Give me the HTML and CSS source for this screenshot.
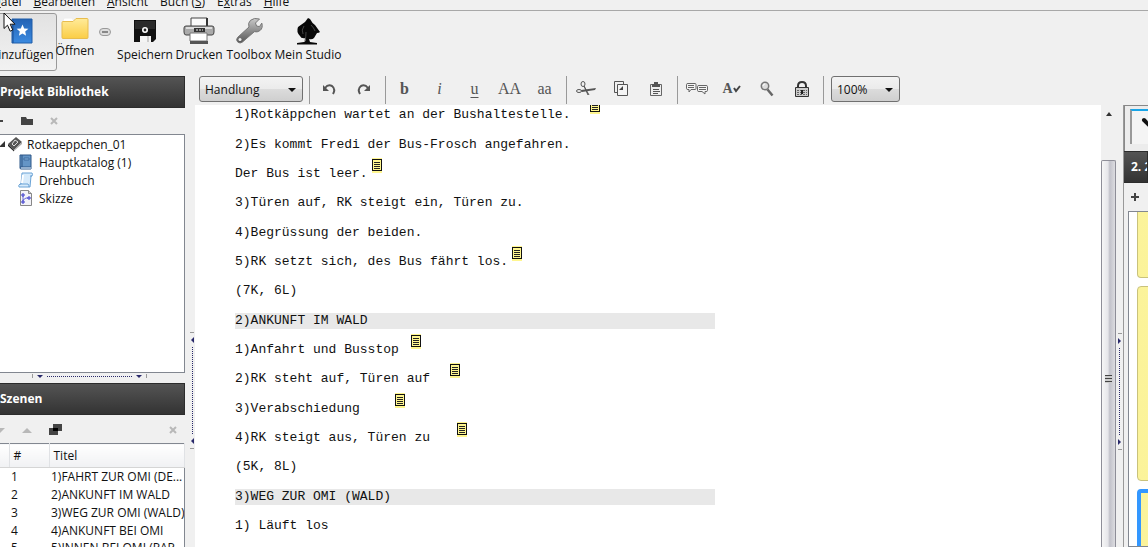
FILE: index.html
```
<!DOCTYPE html>
<html lang="de">
<head>
  <meta charset="UTF-8">
  <title>Rotkaeppchen_01</title>
  <link rel="stylesheet" href="styles.css">
</head>
<body>

<nav class="menu">
  <a href="#"><u>D</u>atei</a>
  <a href="#"><u>B</u>earbeiten</a>
  <a href="#"><u>A</u>nsicht</a>
  <a href="#">Buch (<u>S</u>)</a>
  <a href="#">E<u>x</u>tras</a>
  <a href="#"><u>H</u>ilfe</a>
</nav>

<div class="toolbar">
  <button class="tool active">
    <svg width="22" height="26" viewBox="0 0 22 26"><defs><linearGradient id="gb" x2="0" y2="1"><stop stop-color="#2463b4"/><stop offset="1" stop-color="#3b8ae0"/></linearGradient></defs><path d="M1 1h20v24H1z" fill="url(#gb)" stroke="#1f5da8"/><path d="M2 1v24" stroke="#1a4f94"/><path d="M11.500 6.500l1.700 3.900 4.200.4-3.200 2.800.9 4.100-3.600-2.100-3.600 2.100.9-4.100-3.200-2.800 4.200-.4z" fill="#fff"/></svg>
    <span>Hinzufügen</span>
  </button>
  <button class="tool open">
    <svg width="28" height="24" viewBox="0 0 28 24"><defs><linearGradient id="gf" x2="0" y2="1"><stop stop-color="#ffeb9a"/><stop offset="1" stop-color="#fbcd45"/></linearGradient></defs><path d="M2 4l1-3h8l2 3" fill="#fff" stroke="#eee"/><path d="M1 5.500q0-1 1-1h10l3-3h11q1 0 1 1v18q0 1-1 1H2q-1 0-1-1z" fill="url(#gf)" stroke="#e8bd4e"/></svg>
    <span>Öffnen</span>
  </button>
  <button class="more" aria-label="Mehr">
    <svg width="12" height="9" viewBox="0 0 12 9"><rect x=".5" y=".5" width="11" height="7" rx="3.500" fill="#ddd" stroke="#999"/><path d="M3 3h6v2H3z" fill="#888"/></svg>
  </button>
  <button class="tool save">
    <svg width="24" height="26" viewBox="0 0 24 26"><path d="M1 2h22v19l-3 3H1z" fill="#111"/><path d="M2 3h20v8H2z" fill="#2a2a2a"/><circle cx="12" cy="12" r="2.200" fill="#222" stroke="#fff" stroke-width="1.600"/><path d="M7 18h11v6H7z" fill="#f4f4f4"/><path d="M14 18h2v6h-2z" fill="#ccc"/></svg>
    <span>Speichern</span>
  </button>
  <button class="tool print">
    <svg width="32" height="28" viewBox="0 0 32 28"><path d="M8 1h16v10H8z" fill="#fafafa" stroke="#444"/><path d="M24 1v9" stroke="#333" stroke-width="2"/><path d="M3 9h26q2 0 2 2v4q0 3-2 3H3q-2 0-2-3v-4q0-2 2-2z" fill="#aaa" stroke="#444"/><path d="M3 10h26v2H3z" fill="#ddd"/><path d="M11 11h11v4H11z" fill="#333"/><path d="M13 13h2m1 0h2m1 0h1" stroke="#eee"/><path d="M7 16h17v8H7z" fill="#fff" stroke="#777"/><path d="M7 24h18v3H7z" fill="#555"/></svg>
    <span>Drucken</span>
  </button>
  <button class="tool box">
    <svg width="28" height="28" viewBox="0 0 28 28"><defs><linearGradient id="gw" x2="0" y2="1"><stop stop-color="#c9c9c9"/><stop offset="1" stop-color="#555"/></linearGradient></defs><path d="M24.500 2l-4 4 1 3 3 .6 2.300-3.500q1.500 5-2 7.600-2.500 1.800-5.500 1L7.500 25q-2.500 2-4.800 0-2.200-2.300 0-4.700L14 10q-1.500-4 1.500-6.700 3.500-3 9-1.300z" fill="url(#gw)" stroke="#777"/><circle cx="5" cy="22.500" r="1.500" fill="#eee"/></svg>
    <span>Toolbox</span>
  </button>
  <button class="tool studio">
    <svg width="26" height="28" viewBox="0 0 26 28"><path d="M13 1l2 1q2 4 5 6l5 7q-1 1-3 1l-3 5q-2 2-5 1l1 3 7 1v1.500H2V26l7-1q2-1 2-4-5 1-6-2-4-4-2-9l7-5z" fill="#080808"/><path d="M9 9q-3 4-1 8" fill="none" stroke="#444"/><path d="M16 8q3 3 4 6m-9 1q0 5-1 9" fill="none" stroke="#444"/></svg>
    <span>Mein Studio</span>
  </button>
</div>

<main class="work">
  <aside class="left">
    <h2>Projekt Bibliothek</h2>
    <div class="icons library-icons">
      <button aria-label="Neu"><svg width="10" height="10" viewBox="0 0 10 10"><path d="M1 5h8M5 1v8" stroke="#444" stroke-width="2"/></svg></button>
      <button aria-label="Ordner"><svg width="12" height="10" viewBox="0 0 12 10"><path d="M0 1h5l1 2h6v6H0z" fill="#444"/></svg></button>
      <button aria-label="Löschen"><svg width="8" height="8" viewBox="0 0 8 8"><path d="M1 1l6 6M7 1L1 7" stroke="#b8b8b8" stroke-width="2"/></svg></button>
    </div>
    <ul class="tree">
      <li class="root">
        <svg width="26" height="16" viewBox="0 0 26 16"><path d="M5 5v6H-1z" fill="#333"/><path d="M8 8l8-7 6 5-8 8z" fill="#555"/><path d="M8 8l6 6v1.500L8 10z" fill="#222"/><path d="M14 14l8-8v2l-8 7z" fill="#aaa"/><path d="M12 8l3-4 3 2-4 4z" fill="none" stroke="#ddd"/></svg>
        Rotkaeppchen_01
      </li>
      <li>
        <svg width="16" height="16" viewBox="0 0 16 16"><path d="M2 1h11v14H3q-1 0-1-1z" fill="#6495c6" stroke="#2c5687"/><path d="M4 1v12M2 13h11" stroke="#2c5687"/><path d="M3 14h10" stroke="#dce8f4"/><path d="M6 4h5v2H6z" fill="#88b2dc" stroke="#3f6c9f"/></svg>
        Hauptkatalog (1)
      </li>
      <li>
        <svg width="16" height="16" viewBox="0 0 16 16"><path d="M4 1h10q1 1 0 3h-1l-1 11H1q-1-2 1-3h1z" fill="#d7ebfb" stroke="#6ba3d6"/><path d="M12 4h2M2 12h8q1 1 1 3" fill="none" stroke="#6ba3d6"/><path d="M5 3l-1 8" stroke="#fff" stroke-width="2"/></svg>
        Drehbuch
      </li>
      <li>
        <svg width="16" height="16" viewBox="0 0 16 16"><path d="M2.500.5h8l3 3v12h-11z" fill="#f3f3f8" stroke="#888"/><path d="M10.500.5v3h3" fill="#ccc" stroke="#888"/><path d="M5 5v7M5 10l3-2h3" fill="none" stroke="#6a6ad8"/><path d="M4 4h2v2H4zM4 11h2v2H4zM10 7h2v2h-2z" fill="#fff" stroke="#3030c8"/></svg>
        Skizze
      </li>
    </ul>
    <div class="splitter-h"><i class="tick"></i><i class="down"></i><i class="dots"></i><i class="down"></i><i class="tick"></i></div>
    <section class="scenes">
      <h2>Szenen</h2>
      <div class="icons scene-icons">
        <button aria-label="Nach unten"><svg width="10" height="5" viewBox="0 0 10 5"><path d="M0 0h10L5 5z" fill="#b8b8b8"/></svg></button>
        <button aria-label="Nach oben"><svg width="10" height="5" viewBox="0 0 10 5"><path d="M0 5h10L5 0z" fill="#b8b8b8"/></svg></button>
        <button aria-label="Kopieren"><svg width="14" height="12" viewBox="0 0 14 12"><path d="M4 0h9v7H4zM0 4h9v7H0z" fill="#444"/><path d="M4 4h5v3H4z" fill="#000"/></svg></button>
        <button class="end" aria-label="Löschen"><svg width="8" height="8" viewBox="0 0 8 8"><path d="M1 1l6 6M7 1L1 7" stroke="#b8b8b8" stroke-width="2"/></svg></button>
      </div>
      <table>
        <thead><tr><th></th><th>#</th><th>Titel</th></tr></thead>
        <tbody>
          <tr><td></td><td>1</td><td>1)FAHRT ZUR OMI (DE...</td></tr>
          <tr><td></td><td>2</td><td>2)ANKUNFT IM WALD</td></tr>
          <tr><td></td><td>3</td><td>3)WEG ZUR OMI (WALD)</td></tr>
          <tr><td></td><td>4</td><td>4)ANKUNFT BEI OMI</td></tr>
          <tr><td></td><td>5</td><td>5)INNEN BEI OMI (PAP...</td></tr>
        </tbody>
      </table>
    </section>
  </aside>

  <div class="splitter-v left-split"><i class="tick"></i><i class="arrow back"></i><i class="dots"></i><i class="arrow back"></i><i class="tick"></i></div>

  <section class="center">
    <div class="format">
      <label class="pick style-pick"><select aria-label="Absatzart"><option>Handlung</option></select></label>
      <i class="sep"></i>
      <button aria-label="Rückgängig"><svg width="16" height="14" viewBox="0 0 16 14"><path d="M4 6q3-4 7-2 4 3 1 8" fill="none" stroke="#555" stroke-width="2"/><path d="M2 3v6h6z" fill="#555"/></svg></button>
      <button aria-label="Wiederholen"><svg width="16" height="14" viewBox="0 0 16 14"><path d="M12 6Q9 2 5 4q-4 3-1 8" fill="none" stroke="#555" stroke-width="2"/><path d="M14 3v6H8z" fill="#555"/></svg></button>
      <i class="sep"></i>
      <button><b>b</b></button>
      <button><em>i</em></button>
      <button><u>u</u></button>
      <button>AA</button>
      <button>aa</button>
      <i class="sep"></i>
      <button aria-label="Ausschneiden"><svg width="20" height="16" viewBox="0 0 20 16"><g fill="none" stroke="#555"><ellipse cx="7" cy="3" rx="2" ry="2.500"/><path d="M8 5l4 9"/><ellipse cx="3" cy="10" rx="2.500" ry="1.500"/><path d="M8 5l5 9"/></g><path d="M5 9l15-2-1 2-13 2z" fill="#555"/></svg></button>
      <button aria-label="Kopieren"><svg width="14" height="16" viewBox="0 0 14 16"><path d="M3.500 11.500h-3V.5h9v3" fill="none" stroke="#555"/><path d="M3.500 3.500h10v11h-10z" fill="#f4f4f4" stroke="#555"/><path d="M9 5v4H5z" fill="#444"/></svg></button>
      <button aria-label="Einfügen"><svg width="12" height="14" viewBox="0 0 12 14"><path d="M.5 2.500h11v11H.5z" fill="#eee" stroke="#666"/><path d="M4 0h4v2h2v3H2V2h2z" fill="#555"/><path d="M3 7.500h6M3 9.500h7M3 11.500h5" stroke="#555"/></svg></button>
      <i class="sep"></i>
      <button aria-label="Kommentare"><svg width="22" height="14" viewBox="0 0 22 14"><g fill="#f4f4f4" stroke="#666"><path d="M2 1.500h7q1 0 1 1v4q0 1-1 1H5L3 10V7.500H2q-1.500 0-1.500-1v-4q0-1 1.500-1z"/><path d="M13 3.500h7q1.500 0 1.500 1v4q0 1-1.500 1h-1V12l-3-2.500h-3q-1.500 0-1.500-1v-4q0-1 1.500-1z"/><path d="M2 3.500h6M2 5.500h6M13 5.500h7M13 7.500h7"/></g></svg></button>
      <button class="spell" aria-label="Rechtschreibung"><b>A</b><svg width="8" height="8" viewBox="0 0 8 8"><path d="M1 3l2 3 4-5" fill="none" stroke="#444" stroke-width="2"/></svg></button>
      <button aria-label="Suchen"><svg width="14" height="16" viewBox="0 0 14 16"><circle cx="5" cy="5" r="3.700" fill="#ddd" stroke="#777" stroke-width="1.500"/><path d="M5 3q-2 0-2 2" fill="none" stroke="#fff"/><path d="M7.500 8.500l5 6" stroke="#666" stroke-width="2.500"/></svg></button>
      <button aria-label="Sperren"><svg width="14" height="16" viewBox="0 0 14 16"><path d="M3 7V5q0-4 4-4t4 4v2" fill="none" stroke="#333" stroke-width="2"/><path d="M.5 6.500h13v9H.5z" fill="#ccc" stroke="#333"/><path d="M2 9.500h10M2 11.500h10M2 13.500h10" stroke="#666" stroke-dasharray="2 1"/><path d="M6 9h2v4H6z" fill="#222"/></svg></button>
      <i class="sep"></i>
      <label class="pick zoom-pick"><select aria-label="Zoom"><option>100%</option></select></label>
    </div>
    <div class="editor">
      <div class="script">
        <p>1)Rotkäppchen wartet an der Bushaltestelle.  <i class="note"></i></p>
        <p>2)Es kommt Fredi der Bus-Frosch angefahren.</p>
        <p>Der Bus ist leer.<i class="note"></i></p>
        <p>3)Türen auf, RK steigt ein, Türen zu.</p>
        <p>4)Begrüssung der beiden.</p>
        <p>5)RK setzt sich, des Bus fährt los.<i class="note"></i></p>
        <p>(7K, 6L)</p>
        <p class="scene">2)ANKUNFT IM WALD</p>
        <p>1)Anfahrt und Busstop <i class="note"></i></p>
        <p>2)RK steht auf, Türen auf  <i class="note"></i></p>
        <p>3)Verabschiedung    <i class="note"></i></p>
        <p>4)RK steigt aus, Türen zu   <i class="note"></i></p>
        <p>(5K, 8L)</p>
        <p class="scene">3)WEG ZUR OMI (WALD)</p>
        <p>1) Läuft los</p>
      </div>
      <div class="scrollbar">
        <div class="up"></div>
        <div class="thumb"><i></i></div>
      </div>
    </div>
  </section>

  <div class="splitter-v right-split"><i class="tick"></i><i class="arrow"></i><i class="dots"></i><i class="arrow"></i><i class="tick"></i></div>

  <aside class="right">
    <div class="tabs"><button class="tab" aria-label="Stift"><svg width="26" height="28" viewBox="0 0 26 28"><path d="M12 8l14 14" stroke="#111" stroke-width="4" stroke-linecap="round"/></svg></button></div>
    <h2>2. 2)ANKUNFT</h2>
    <div class="icons card-icons">
      <button aria-label="Neue Karte"><svg width="8" height="8" viewBox="0 0 8 8"><path d="M0 4h8M4 0v8" stroke="#444" stroke-width="2"/></svg></button>
    </div>
    <div class="cards">
      <div class="card first"></div>
      <div class="card"></div>
      <div class="card selected"></div>
    </div>
  </aside>
</main>

<svg class="cursor" width="13" height="21" viewBox="0 0 13 21"><path d="M1 1v15.500l3.500-3.300 2.600 6 2.700-1.200-2.600-5.800H12z" fill="#fff" stroke="#111"/></svg>

</body>
</html>
```
FILE: styles.css
```
* { box-sizing: border-box; }
body {
  margin: 0;
  height: 100vh;
  overflow: hidden;
  display: flex;
  flex-direction: column;
  background: #f0f0f0;
  color: #111;
  font-family: "Open Sans", "Noto Sans", sans-serif;
  font-size: 12px;
}
button {
  background: none;
  border: none;
  padding: 0;
  margin: 0;
  font: inherit;
  color: inherit;
}
svg { display: block; flex: none; }
i { font-style: normal; }

/* menu */
.menu {
  height: 11px;
  flex: none;
  display: flex;
  align-items: flex-end;
  gap: 12px;
  overflow: hidden;
  border-bottom: 1px solid #a8a8a8;
  line-height: 16px;
}
.menu a { color: #111; text-decoration: none; white-space: nowrap; }
.menu a:first-child { margin-left: -8px; }

/* main toolbar */
.toolbar {
  height: 65px;
  flex: none;
  display: flex;
  align-items: flex-start;
  padding-top: 2px;
}
.tool {
  display: flex;
  flex-direction: column;
  align-items: center;
  padding-top: 4px;
  white-space: nowrap;
}
.tool svg { height: 28px; }
.tool span { line-height: 20px; }
.active {
  width: 71px;
  height: 58px;
  margin-left: -14px;
  padding-top: 3px;
  border: 1px solid #999;
  border-radius: 3px;
  background: linear-gradient(#e2e2e2, #f2f2f2);
}
.open { width: 36px; }
.open svg { height: 24px; }
.more { margin: 15px 0 0 6px; }
.save { width: 52px; margin-left: 8px; }
.print { width: 44px; margin-left: 6px; }
.box { width: 44px; margin-left: 6px; }
.studio { width: 64px; margin-left: 5px; }

/* panels */
.work { flex: 1; min-height: 0; display: flex; }
h2 {
  margin: 0;
  height: 32px;
  flex: none;
  font-size: 12px;
  line-height: 30px;
  color: #fff;
  background: linear-gradient(#545454, #333);
  border: 1px solid #2c2c2c;
  border-left: 0;
  white-space: nowrap;
  overflow: hidden;
}
.left {
  width: 185px;
  flex: none;
  display: flex;
  flex-direction: column;
}
.icons { display: flex; align-items: center; flex: none; }
.library-icons { height: 26px; gap: 17px; margin-left: -6px; }
.tree {
  flex: 1;
  margin: 0;
  padding: 0;
  list-style: none;
  background: #fff;
  border: 1px solid #828790;
  border-left: 0;
}
.tree li {
  display: flex;
  align-items: center;
  gap: 5px;
  height: 18px;
  padding-left: 18px;
}
.tree .root { padding-left: 0; gap: 1px; }

.splitter-h {
  height: 10px;
  flex: none;
  display: flex;
  align-items: flex-start;
  gap: 4px;
  padding: 1px 38px 0 32px;
}
.splitter-h .tick { width: 1px; height: 4px; background: #999; }
.splitter-h .down { border: 3px solid transparent; border-top-color: #28286a; border-bottom: 0; margin-top: 1px; }
.splitter-h .dots { flex: 1; border-top: 1px dotted #28286a; margin-top: 2px; }

.scenes { height: 164px; flex: none; overflow: hidden; }
.scene-icons { height: 28px; gap: 17px; margin-left: -5px; padding: 2px 8px 0 0; }
.scene-icons .end { margin-left: auto; }
table {
  width: 100%;
  table-layout: fixed;
  border-collapse: collapse;
  background: #fff;
  border: 1px solid #828790;
  border-left: 0;
}
th {
  height: 24px;
  padding: 0 0 0 4px;
  text-align: left;
  font-weight: normal;
  background: linear-gradient(#fff, #f0f1f3);
  border-right: 1px solid #e0e2e5;
  border-bottom: 1px solid #d5d5d5;
}
th:nth-child(1) { width: 9px; }
th:nth-child(2) { width: 40px; }
td {
  height: 18px;
  padding: 0 0 0 2px;
  line-height: 16px;
  white-space: nowrap;
  overflow: hidden;
}

.splitter-v {
  flex: none;
  display: flex;
  flex-direction: column;
  align-items: center;
  padding-top: 256px;
  gap: 4px;
}
.splitter-v .tick { width: 4px; height: 1px; background: #999; }
.splitter-v .arrow { border: 3px solid transparent; border-left-color: #28286a; border-right: 0; }
.splitter-v .back { border: 3px solid transparent; border-right-color: #28286a; border-left: 0; }
.splitter-v .dots { height: 87px; border-left: 1px dotted #28286a; }
.left-split { width: 10px; padding-left: 4px; }
.right-split { width: 8px; margin-top: 29px; padding-top: 228px; border-right: 1px solid #999; }

/* editor */
.center { flex: 1; min-width: 0; display: flex; flex-direction: column; }
.format {
  height: 29px;
  flex: none;
  display: flex;
  align-items: flex-start;
  padding-left: 4px;
}
.format button {
  width: 35px;
  height: 26px;
  flex: none;
  display: flex;
  align-items: center;
  justify-content: center;
  font-family: "Liberation Serif", serif;
  font-size: 16px;
  color: #555;
}
.format u { text-underline-offset: 3px; }
.format .spell { font-size: 14px; }
.sep { width: 1px; height: 28px; margin: 0 1px 0 4px; background: #999; flex: none; }
.pick { position: relative; height: 26px; flex: none; }
.pick::after {
  content: "";
  position: absolute;
  right: 7px;
  top: 12px;
  border: 4px solid transparent;
  border-top-color: #111;
  border-bottom: 0;
  pointer-events: none;
}
.pick select {
  appearance: none;
  width: 100%;
  height: 26px;
  padding: 0 5px;
  border: 1px solid #707070;
  border-radius: 3px;
  background: linear-gradient(#f3f3f3, #ebebeb 50%, #dcdcdc 50%, #cfcfcf);
  font: inherit;
  color: #111;
}
.style-pick { width: 104px; margin-right: 2px; }
.zoom-pick { width: 69px; margin-left: 6px; }

.editor { flex: 1; min-height: 0; display: flex; background: #fff; overflow: hidden; }
.script {
  flex: 1;
  padding: 2px 0 0 40px;
  font-family: "Liberation Mono", monospace;
  font-size: 13px;
}
.script p {
  width: 480px;
  height: 16px;
  margin: 0 0 13px;
  line-height: 16px;
  white-space: pre;
}
.script p:nth-child(3n+1) { margin-bottom: 14px; }
.scene { background: #e8e8e8; }
.note {
  display: inline-block;
  width: 10px;
  height: 12px;
  margin: -12px 0 0 4px;
  vertical-align: 6px;
  border: 1px solid #111;
  background: repeating-linear-gradient(#fff68f 0 1px, #222 1px 2px) content-box, #fff68f;
  padding: 1px;
  box-shadow: 0 2px #fff68f, 0 -1px #fff68f;
}

.scrollbar {
  width: 15px;
  flex: none;
  display: flex;
  flex-direction: column;
  background: #f0f0f0;
}
.up { height: 55px; padding: 7px 0 0 5px; }
.up::before {
  content: "";
  display: block;
  width: 0;
  border: 3px solid transparent;
  border-bottom: 4px solid #333;
  border-top: 0;
}
.thumb {
  flex: 1;
  padding: 214px 0 0 3px;
  border: 1px solid #8e8e98;
  border-bottom: 0;
  border-radius: 2px 2px 0 0;
  background: linear-gradient(90deg, #f6f6f6, #e6e6ea 45%, #c2c2ca 60%, #dcdce0);
}
.thumb i {
  display: block;
  width: 7px;
  height: 8px;
  background: repeating-linear-gradient(#444 0 1px, #ccc 1px 3px);
}

/* note cards */
.right {
  width: 24px;
  flex: none;
  padding-top: 29px;
  display: flex;
  flex-direction: column;
  overflow: hidden;
}
.tabs { height: 46px; flex: none; padding: 3px 0 0 5px; border-top: 1px solid #888; border-left: 1px solid #888; background: #ececec; }
.tab { height: 35px; border-left: 2px solid #999; border-top: 2px solid #18a5e8; background: #f4f4f4; overflow: hidden; }
.tab svg { margin-top: -4px; }
.right h2 { padding-left: 7px; }
.card-icons { height: 28px; padding-left: 7px; }
.cards {
  flex: 1;
  margin-left: 4px;
  padding-left: 8px;
  background: #fff;
  border: 1px solid #828790;
  border-right: 0;
  overflow: hidden;
}
.card {
  width: 160px;
  height: 195px;
  margin-bottom: 8px;
  border: 1px solid #c9c27c;
  border-radius: 4px;
  background: linear-gradient(90deg, #fbf39a, #fff7a8);
}
.first { height: 66px; border-top: 0; border-radius: 0 0 4px 4px; }
.selected { border: 4px solid #3397ff; }

/* mouse pointer lies over the toolbar */
.cursor { position: absolute; left: 3px; top: 12px; }
```
